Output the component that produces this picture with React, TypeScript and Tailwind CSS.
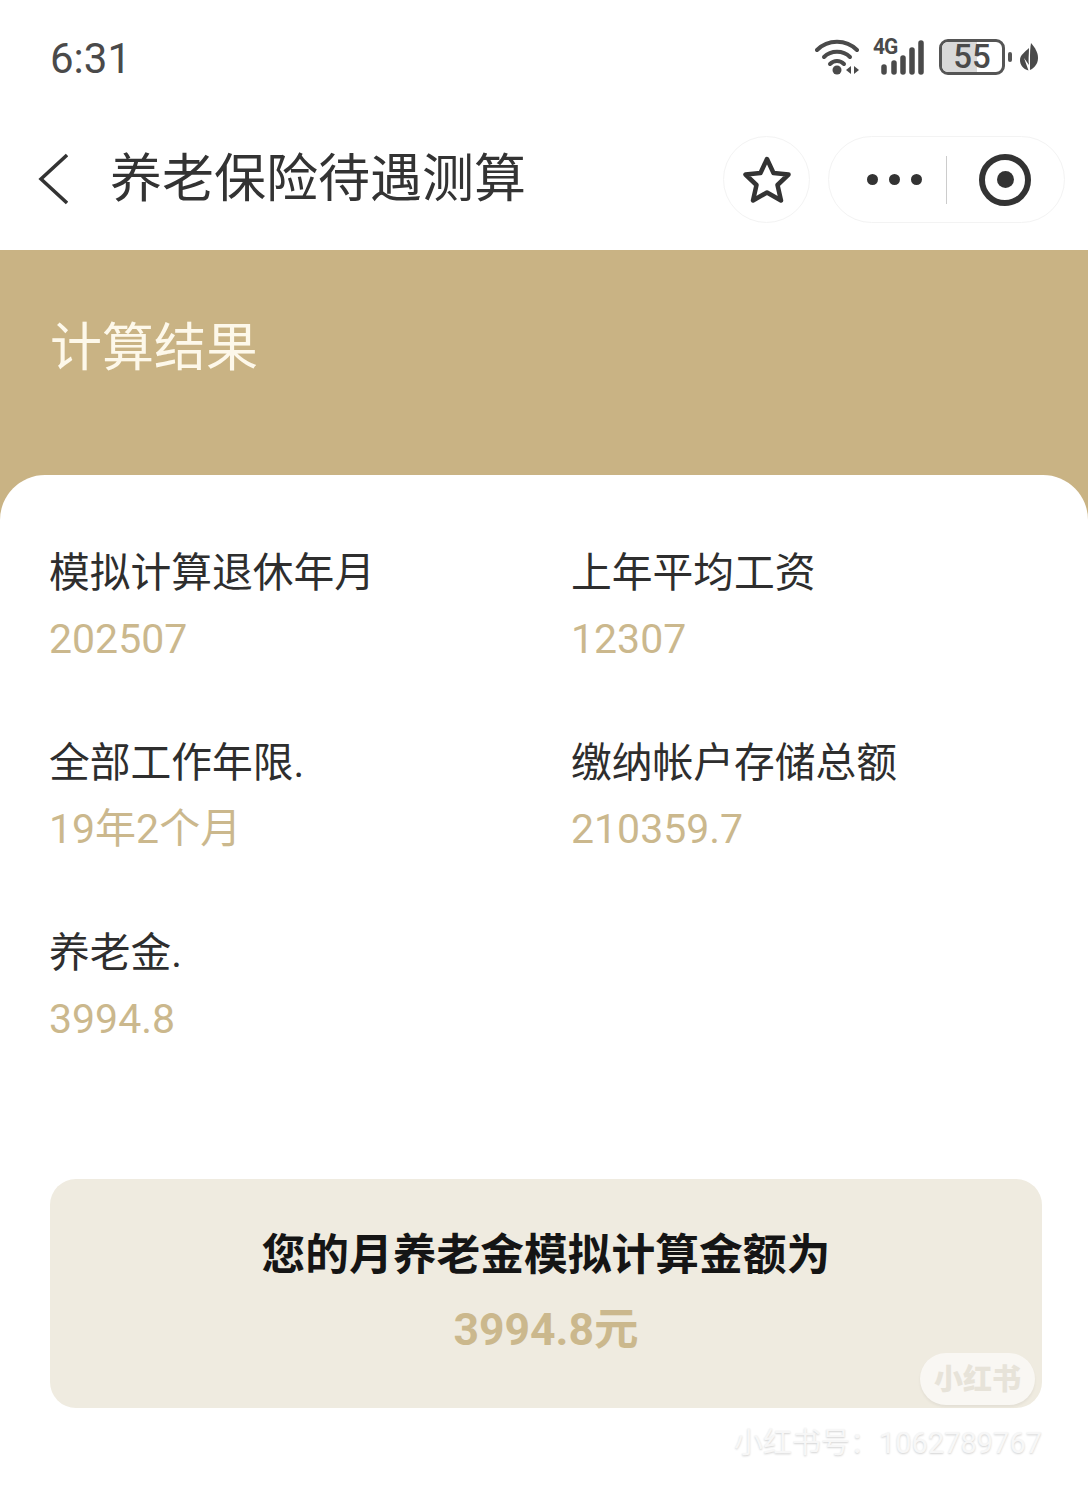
const FONT = "font-['Roboto','Noto_Sans_CJK_SC',sans-serif]";

type Item = { label: string; value: string };

const items: Item[] = [
  { label: "模拟计算退休年月", value: "202507" },
  { label: "上年平均工资", value: "12307" },
  { label: "全部工作年限.", value: "19年2个月" },
  { label: "缴纳帐户存储总额", value: "210359.7" },
  { label: "养老金.", value: "3994.8" },
];

function StatusIcons() {
  return (
    <div className="flex items-center">
      <svg width="46" height="36" viewBox="0 0 46 36" className="text-[#4a4a4a]">
        <g fill="none" stroke="currentColor" strokeWidth="4" strokeLinecap="round">
          <path d="M2 11 C13 0 31 0 42 11" />
          <path d="M9 18 C16 11 28 11 35 18" />
          <path d="M15 25 C19 21 25 21 29 25" />
        </g>
        <circle cx="22" cy="31" r="4.5" fill="currentColor" />
        <path d="M36 27v8l-5-4zM39 27v8l5-4z" fill="currentColor" />
      </svg>
      <div className="relative ml-[13px] h-[36px] w-[51px]">
        <span className="absolute left-[-1px] top-[-1px] origin-top-left scale-x-[0.95] text-[22px] font-bold leading-[18px] tracking-[-1px] text-[#4a4a4a]">
          4G
        </span>
        <svg width="51" height="36" viewBox="0 0 51 36" className="text-[#4a4a4a]">
          <g stroke="currentColor" strokeWidth="5.5" strokeLinecap="round">
            <path d="M10 28v5M20 24v9M29 19v14M38 11v22M47 4v29" />
          </g>
        </svg>
      </div>
      <div className="relative ml-[14px] flex h-[36px] w-[66px] items-center justify-center rounded-[9px] border-[3px] border-[#555555]">
        <div className="absolute inset-y-0 left-0 w-[59%] rounded-l-[6px] bg-[#d9d9d9]" />
        <span className="relative text-[33px] font-medium leading-[30px] text-[#4a4a4a]">55</span>
      </div>
      <div className="ml-[3px] h-[10px] w-[4px] rounded-[2px] bg-[#555555]" />
      <svg width="18" height="28" viewBox="0 0 18 28" className="ml-[8px]">
        <path d="M11 0 C15 5 18 9 18 15 C18 21 14 25 10 27 L10 15 C10 11 10 6 11 0Z" fill="#4a4a4a" />
        <path d="M9 5 C9 12 8 17 9 22 L4 15 L8.5 27.5 C3 26 0 22 0 17 C0 12 5 9 9 5Z" fill="#4a4a4a" />
      </svg>
    </div>
  );
}

function NavCapsule() {
  return (
    <div className="flex items-center gap-[18px]">
      <div className="flex h-[87px] w-[87px] items-center justify-center rounded-full border border-[#f3f3f3]">
        <svg width="50" height="48" viewBox="0 0 50 48" fill="none">
          <path
            d="M25 3 L31.5 17 L46.5 18.5 L35.5 29 L39 44.5 L25 36.5 L11 44.5 L14.5 29 L3.5 18.5 L18.5 17 Z"
            stroke="#333333"
            strokeWidth="4.5"
            strokeLinejoin="round"
          />
        </svg>
      </div>
      <div className="flex h-[87px] w-[237px] items-center rounded-full border border-[#f3f3f3] pl-[38px]">
        <div className="flex items-center gap-[11px]">
          <span className="h-[11px] w-[11px] rounded-full bg-[#333333]" />
          <span className="h-[11px] w-[11px] rounded-full bg-[#333333]" />
          <span className="h-[11px] w-[11px] rounded-full bg-[#333333]" />
        </div>
        <div className="ml-[24px] h-[48px] w-px bg-[#cccccc]" />
        <div className="ml-[32px] flex h-[52px] w-[52px] items-center justify-center rounded-full border-[6px] border-[#333333]">
          <span className="h-[17px] w-[17px] rounded-full bg-[#333333]" />
        </div>
      </div>
    </div>
  );
}

export default function App() {
  return (
    <div className={`${FONT} relative h-[1492px] w-[1088px] overflow-hidden bg-white`}>
      <div className="flex h-[116px] items-start justify-between pl-[50px] pr-[50px] pt-[36px]">
        <span className="text-[42px] leading-[46px] text-[#4a4a4a]">6:31</span>
        <div className="pt-[3px]">
          <StatusIcons />
        </div>
      </div>

      <div className="flex h-[134px] items-start justify-between pl-[38px] pr-[23px]">
        <div className="flex items-center pt-[36px]">
          <svg width="30" height="52" viewBox="0 0 30 52" fill="none" className="mb-[3px]">
            <path d="M29 2 L3 26 L29 50" stroke="#333333" strokeWidth="3.5" />
          </svg>
          <h1 className="ml-[42px] text-[52px] font-normal leading-[56px] text-[#333333]">
            养老保险待遇测算
          </h1>
        </div>
        <div className="pt-[20px]">
          <NavCapsule />
        </div>
      </div>

      <div className="h-[270px] bg-[#c9b384] pl-[50px] pt-[67px]">
        <div className="text-[52px] leading-[64px] text-[#fdf8ea]">计算结果</div>
      </div>

      <div className="-mt-[45px] h-[1017px] rounded-t-[45px] bg-white pl-[50px] pr-[46px] pt-[74px]">
        <div className="-ml-px grid grid-cols-[522px_1fr] gap-y-[64px]">
          {items.map((item) => (
            <div key={item.label} className="h-[126px]">
              <div className="text-[40.75px] leading-[48px] text-[#2e2e2e]">{item.label}</div>
              <div className="mt-[18px] text-[41px] leading-[48px] text-[#cbb88d]">{item.value}</div>
            </div>
          ))}
        </div>

        <div className="relative mt-[124px] flex h-[229px] flex-col items-center rounded-[26px] bg-[#efebe0] pt-[50px]">
          <div className="text-[43.75px] font-bold leading-[52px] text-[#151515]">
            您的月养老金模拟计算金额为
          </div>
          <div className="mt-[23px] text-[44.5px] font-bold leading-[52px] text-[#cbb88d]">3994.8元</div>
          <div className="absolute bottom-[3px] right-[7px] flex h-[52px] w-[115px] items-center justify-center rounded-full bg-[#f9f7f3] pt-[3px] text-[29px] font-black text-[#e7e3d9] shadow-[0_2px_3px_rgba(0,0,0,0.05)]">
            小红书
          </div>
        </div>

        <div className="mt-[15px] flex justify-end text-[29px] leading-[40px] text-[#f7f7f7] [text-shadow:0_1px_2px_rgba(0,0,0,0.18)]">
          小红书号：1062789767
        </div>
      </div>
    </div>
  );
}
